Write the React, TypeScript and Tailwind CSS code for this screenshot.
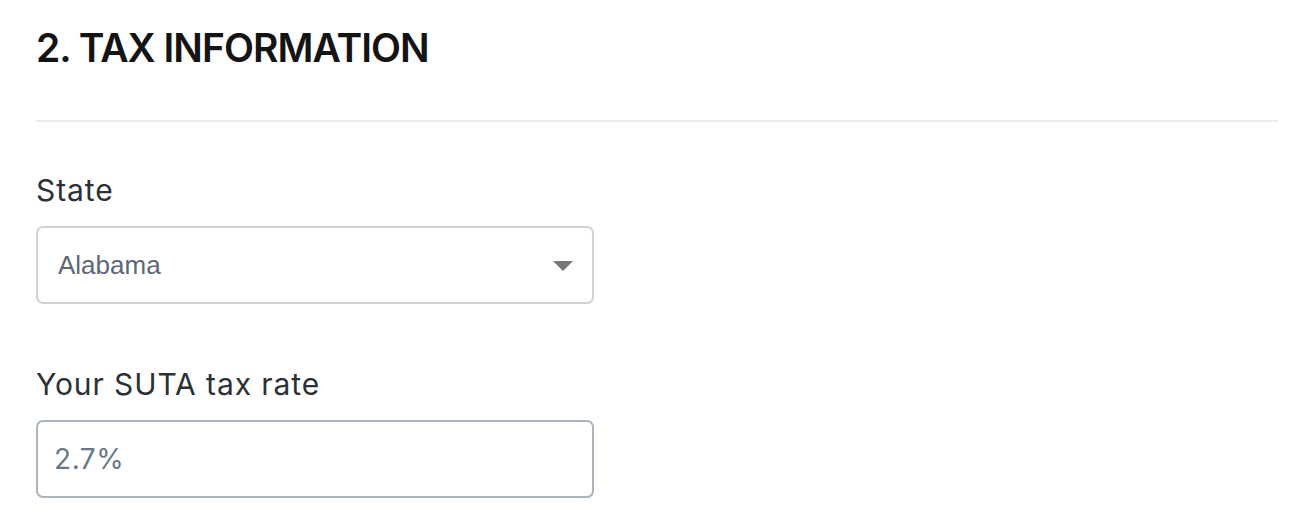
import { useState } from 'react'

const STATES = ['Alabama', 'Alaska', 'Arizona', 'Arkansas', 'California']

export default function App() {
  const [state, setState] = useState('Alabama')
  const [rate, setRate] = useState('2.7%')

  return (
    <div className="min-h-screen bg-white px-[36px] pr-[28px] pt-[26px] font-['Inter',sans-serif]">
      {/* Header */}
      <h2 className="text-[39px] font-semibold uppercase leading-[44px] tracking-[-0.025em] text-[#141414]">
        2. Tax Information
      </h2>
      <div className="mt-[50px] h-[2px] w-full bg-[#e8eaed]" />

      {/* State */}
      <label className="mt-[50px] block text-[30px] leading-[36px] tracking-[0.03em] text-[#2b3136]">
        State
      </label>
      <div className="relative mt-[18px] w-[558px]">
        <select
          value={state}
          onChange={(e) => setState(e.target.value)}
          className="h-[78px] w-full appearance-none rounded-[7px] border-2 border-[#d0d2d4] bg-white pl-[20px] font-['Liberation_Sans',sans-serif] text-[26px] text-[#5c6877] outline-none"
        >
          {STATES.map((s) => (
            <option key={s}>{s}</option>
          ))}
        </select>
        <svg
          className="pointer-events-none absolute right-[21px] top-[35px]"
          width="20"
          height="10"
          viewBox="0 0 20 10"
        >
          <path d="M0 0 H20 L10 10 Z" fill="#767676" />
        </svg>
      </div>

      {/* SUTA rate */}
      <label className="mt-[62px] block text-[30px] leading-[36px] tracking-[0.03em] text-[#2b3136]">
        Your SUTA tax rate
      </label>
      <input
        value={rate}
        onChange={(e) => setRate(e.target.value)}
        className="mt-[18px] block h-[78px] w-[558px] rounded-[7px] border-2 border-[#aab5bf] bg-white pl-[16px] text-[28px] tracking-[0.02em] text-[#687888] outline-none"
      />
    </div>
  )
}
